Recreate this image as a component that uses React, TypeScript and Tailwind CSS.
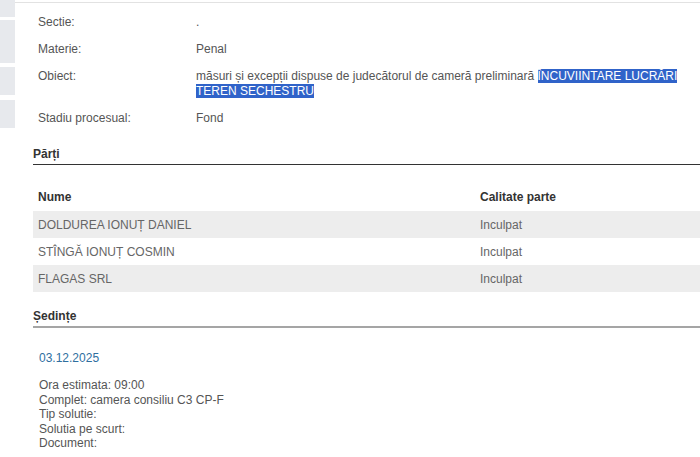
const info = [
  { label: "Sectie:", value: "." },
  { label: "Materie:", value: "Penal" },
]

const parti = [
  { nume: "DOLDUREA IONUȚ DANIEL", calitate: "Inculpat" },
  { nume: "STÎNGĂ IONUȚ COSMIN", calitate: "Inculpat" },
  { nume: "FLAGAS SRL", calitate: "Inculpat" },
]

const detalii = [
  "Ora estimata: 09:00",
  "Complet: camera consiliu C3 CP-F",
  "Tip solutie:",
  "Solutia pe scurt:",
  "Document:",
]

const body = "font-['Liberation_Sans',Arial,sans-serif]"

const InfoRow = ({ label, children }: { label: string; children: React.ReactNode }) => (
  <div className="flex py-[6px] leading-[15px]">
    <div className="w-[158px] shrink-0">{label}</div>
    <div className="w-[492px]">{children}</div>
  </div>
)

const App = () => {
  return (
    <div className={`flex w-[700px] h-[457px] overflow-hidden bg-white text-[12px] text-[#555] ${body}`}>
      <div className="w-[15px] shrink-0 flex flex-col">
        <div className="h-[17px] bg-[#e7e9ed]" />
        <div className="h-[3px]" />
        <div className="h-[43px] bg-[#e7e9ed]" />
        <div className="h-[4px]" />
        <div className="h-[28px] bg-[#e7e9ed]" />
        <div className="h-[5px]" />
        <div className="h-[28px] bg-[#e7e9ed]" />
      </div>
      <div className="flex-1 flex flex-col">
        <div className="mt-[2px] border-t border-[#e2e2e2] pl-[23px] pt-[6px]">
          {info.map((row) => (
            <InfoRow key={row.label} label={row.label}>{row.value}</InfoRow>
          ))}
          <InfoRow label="Obiect:">
            măsuri și excepții dispuse de judecătorul de cameră preliminară{" "}
            <span className="bg-[#3063c9] text-white">ÎNCUVIINTARE LUCRĂRI </span>
            <br />
            <span className="bg-[#3063c9] text-white">TEREN SECHESTRU</span>
          </InfoRow>
          <InfoRow label="Stadiu procesual:">Fond</InfoRow>
        </div>

        <section className="ml-[18px] mt-[15px]">
          <h3 className="font-bold text-[#333] leading-[15px] pb-[2px] border-b border-[#333] h-[18px]">Părți</h3>
          <div className="mt-[18px] text-[#666]">
            <div className="flex h-[28px] items-center font-bold text-[#333]">
              <div className="w-[447px] pl-[5px]">Nume</div>
              <div>Calitate parte</div>
            </div>
            {parti.map((p, i) => (
              <div key={p.nume} className={`flex h-[27px] items-center ${i % 2 === 0 ? "bg-[#ededed]" : "bg-white"}`}>
                <div className="w-[447px] pl-[5px]">{p.nume}</div>
                <div>{p.calitate}</div>
              </div>
            ))}
          </div>
        </section>

        <section className="ml-[18px] mt-[17px]">
          <h3 className="font-bold text-[#333] leading-[15px] pb-[3px] border-b-2 border-[#a5a5a5] h-[19px]">Ședințe</h3>
          <div className="pl-[6px] mt-[23px]">
            <div className="text-[#2f6f9f] leading-[15px]">03.12.2025</div>
            <div className="mt-[12px] leading-[14.5px]">
              {detalii.map((d) => (
                <div key={d}>{d}</div>
              ))}
            </div>
          </div>
        </section>
      </div>
    </div>
  )
}

export default App
